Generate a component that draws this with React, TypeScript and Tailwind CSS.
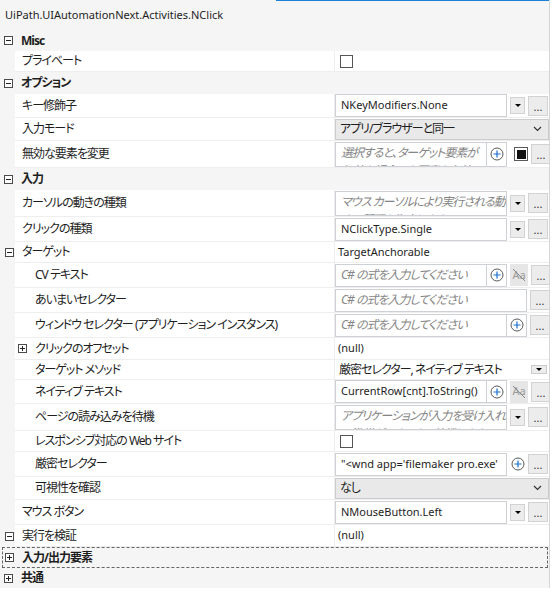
import React from "react";

/* ---------------- SMALL PARTS ---------------- */

// Japanese text: proportional kana + tighter tracking, to get near Yu Gothic UI widths
const JP = "text-[12px] tracking-[-1px]";
const EN = "text-[11px]";

function Expander({ open = true }: { open?: boolean }) {
  return (
    <span className="relative flex h-[9px] w-[9px] shrink-0 items-center justify-center border border-[#4a4a4a] bg-white">
      <span className="absolute h-px w-[5px] bg-[#222]" />
      {!open && <span className="absolute h-[5px] w-px bg-[#222]" />}
    </span>
  );
}

function PlusIcon() {
  return (
    <svg width="14" height="14" viewBox="0 0 14 14">
      <circle cx="7" cy="7" r="6" fill="white" stroke="#5a5a5a" strokeWidth="1" />
      <path d="M7 3.5V10.5M3.5 7H10.5" stroke="#1a6fd0" strokeWidth="1.2" />
    </svg>
  );
}

function Dropdown() {
  return (
    <div className="flex h-[17px] w-[15px] shrink-0 items-center justify-center border border-[#d2d2d2] bg-[#ececec]">
      <span className="h-0 w-0 border-x-[3px] border-t-[3px] border-x-transparent border-t-black" />
    </div>
  );
}

function Dots() {
  return (
    <div className="flex h-[20px] w-[20px] shrink-0 items-end justify-center border border-[#d2d2d2] bg-[#ececec] pb-[3px] text-[11px] leading-none text-[#333]">
      ...
    </div>
  );
}

function AaOff() {
  return (
    <div className="relative flex h-[22px] w-[18px] shrink-0 items-center justify-center bg-[#e6e6e6] text-[11px] text-[#9a9a9a]">
      Aa
      <svg className="absolute inset-0" width="18" height="22" viewBox="0 0 18 22">
        <path d="M3 5L15 17" stroke="#8a8a8a" strokeWidth="1" />
      </svg>
    </div>
  );
}

function BlackSquare() {
  return (
    <div className="flex h-[14px] w-[14px] shrink-0 items-center justify-center border border-[#5a5a5a] bg-white">
      <span className="h-[9px] w-[9px] bg-[#111]" />
    </div>
  );
}

function Checkbox() {
  return <span className="ml-[5px] block h-[13px] w-[13px] border border-[#555] bg-white" />;
}

function Box({
  w,
  h,
  plus,
  children,
}: {
  w: string;
  h: string;
  plus?: boolean;
  children: React.ReactNode;
}) {
  return (
    <div className={`flex ${w} ${h} shrink-0 overflow-hidden border border-[#cdd1d6] bg-white`}>
      <div className="w-0 min-w-0 flex-1 overflow-hidden pl-[5px]">{children}</div>
      {plus && (
        <div className="flex w-[20px] shrink-0 items-center justify-center border-l border-[#cdd1d6]">
          <PlusIcon />
        </div>
      )}
    </div>
  );
}

function Line({ children, ph }: { children: React.ReactNode; ph?: boolean }) {
  return (
    <div
      className={`flex h-full items-center overflow-hidden whitespace-nowrap ${
        ph ? `${JP} italic text-[#858585]` : `${EN} text-[#1e1e1e]`
      }`}
    >
      {children}
    </div>
  );
}

// multi-line text box: first line shown, only the top of the second peeks out
function Multi({ children }: { children: React.ReactNode }) {
  return (
    <div className={`${JP} h-full overflow-hidden break-all pt-[1px] leading-[18px] italic text-[#858585]`}>
      {children}
    </div>
  );
}

function Combo({ text }: { text: string }) {
  return (
    <div className="flex h-[21px] flex-1 items-center justify-between border border-[#cccccc] bg-[#e9e9e9] pl-[4px] pr-[6px] text-[#1e1e1e]">
      <span className={`whitespace-nowrap ${JP}`}>{text}</span>
      <svg width="9" height="6" viewBox="0 0 9 6">
        <path d="M1 1L4.5 4.5L8 1" fill="none" stroke="#333" strokeWidth="1.2" />
      </svg>
    </div>
  );
}

/* ---------------- ROWS ---------------- */

function Category({
  label,
  h,
  open = true,
  focus,
}: {
  label: string;
  h: string;
  open?: boolean;
  focus?: boolean;
}) {
  return (
    <div
      className={`flex items-center bg-[#f5f5f5] ${h} ${
        focus ? "ml-[2px] mr-px border border-dashed border-[#666] pl-[2px]" : "pl-[4px]"
      }`}
    >
      <Expander open={open} />
      <span className={`ml-[8px] font-bold text-[#1e1e1e] ${JP}`}>{label}</span>
    </div>
  );
}

function Prop({
  name,
  h,
  level = 1,
  gutterExp,
  nameExp,
  children,
}: {
  name: string;
  h: string;
  level?: 1 | 2;
  gutterExp?: boolean;
  nameExp?: boolean;
  children?: React.ReactNode;
}) {
  return (
    <div className={`flex ${h}`}>
      <div className="flex w-[15px] shrink-0 items-center bg-[#f5f5f5] pl-[5px]">
        {gutterExp && <Expander />}
      </div>
      <div
        className={`flex w-[319px] shrink-0 items-center border-b border-[#eeeeee] bg-white text-[#1e1e1e] ${
          nameExp ? "pl-[3px]" : level === 2 ? "pl-[20px]" : "pl-[7px]"
        }`}
      >
        {nameExp && (
          <span className="mr-[8px]">
            <Expander open={false} />
          </span>
        )}
        <span className={`whitespace-nowrap ${JP}`}>{name}</span>
      </div>
      <div className="flex min-w-0 flex-1 items-center gap-[3px] overflow-hidden border-b border-l border-[#eeeeee] bg-white">
        {children}
      </div>
    </div>
  );
}

function Plain({ children }: { children: React.ReactNode }) {
  return <span className={`pl-[3px] text-[#1e1e1e] ${EN}`}>{children}</span>;
}

/* ---------------- UI ---------------- */

export default function App() {
  return (
    <div className="relative h-[593px] w-[552px] overflow-hidden bg-white font-['Noto_Sans','Noto_Sans_CJK_JP',sans-serif] text-[12px] [font-feature-settings:'palt']">
      {/* focus accent along the top edge */}
      <div className="absolute left-[276px] top-0 h-px w-[273px] bg-[#1c7fd6]" />

      <div className="w-[550px] border-r border-[#d6d6d6] bg-[#f5f5f5]">
        {/* TITLE */}
        <div className={`flex h-[30px] items-center pl-[5px] text-[#1e1e1e] ${EN}`}>
          UiPath.UIAutomationNext.Activities.NClick
        </div>

        <Category label="Misc" h="h-[21px]" />
        <Prop name="プライベート" h="h-[21px]">
          <Checkbox />
        </Prop>

        <Category label="オプション" h="h-[22px]" />
        <Prop name="キー修飾子" h="h-[24px]">
          <Box w="w-[172px]" h="h-[23px]">
            <Line>NKeyModifiers.None</Line>
          </Box>
          <Dropdown />
          <Dots />
        </Prop>
        <Prop name="入力モード" h="h-[23px]">
          <Combo text="アプリ/ブラウザーと同一" />
        </Prop>
        <Prop name="無効な要素を変更" h="h-[27px]">
          <Box w="w-[172px]" h="h-[25px]" plus>
            <Multi>選択すると、ターゲット要素が無効な場合でも要素を有効にして操作を実行します。</Multi>
          </Box>
          <span className="ml-px" />
          <BlackSquare />
          <Dots />
        </Prop>

        <Category label="入力" h="h-[22px]" />
        <Prop name="カーソルの動きの種類" h="h-[27px]">
          <Box w="w-[172px]" h="h-[25px]">
            <Multi>マウス カーソルにより実行される動きの種類を指定します。</Multi>
          </Box>
          <Dropdown />
          <Dots />
        </Prop>
        <Prop name="クリックの種類" h="h-[25px]">
          <Box w="w-[172px]" h="h-[23px]">
            <Line>NClickType.Single</Line>
          </Box>
          <Dropdown />
          <Dots />
        </Prop>
        <Prop name="ターゲット" h="h-[21px]" gutterExp>
          <Plain>TargetAnchorable</Plain>
        </Prop>
        <Prop name="CV テキスト" h="h-[25px]" level={2}>
          <Box w="w-[172px]" h="h-[23px]" plus>
            <Line ph>C# の式を入力してください</Line>
          </Box>
          <AaOff />
          <Dots />
        </Prop>
        <Prop name="あいまいセレクター" h="h-[25px]" level={2}>
          <Box w="w-[192px]" h="h-[23px]">
            <Line ph>C# の式を入力してください</Line>
          </Box>
          <Dots />
        </Prop>
        <Prop name="ウィンドウ セレクター (アプリケーション インスタンス)" h="h-[25px]" level={2}>
          <Box w="w-[192px]" h="h-[23px]" plus>
            <Line ph>C# の式を入力してください</Line>
          </Box>
          <Dots />
        </Prop>
        <Prop name="クリックのオフセット" h="h-[22px]" level={2} nameExp>
          <Plain>(null)</Plain>
        </Prop>
        <Prop name="ターゲット メソッド" h="h-[20px]" level={2}>
          <div className="flex flex-1 items-center justify-between pl-[4px] pr-[2px]">
            <span className={`whitespace-nowrap text-[#1e1e1e] ${JP}`}>厳密セレクター, ネイティブ テキスト</span>
            <div className="flex h-[9px] w-[16px] items-center justify-center border border-[#cccccc] bg-[#ececec]">
              <span className="h-0 w-0 border-x-[3px] border-t-[3px] border-x-transparent border-t-black" />
            </div>
          </div>
        </Prop>
        <Prop name="ネイティブ テキスト" h="h-[24px]" level={2}>
          <Box w="w-[172px]" h="h-[23px]" plus>
            <Line>CurrentRow[cnt].ToString()</Line>
          </Box>
          <AaOff />
          <Dots />
        </Prop>
        <Prop name="ページの読み込みを待機" h="h-[27px]" level={2}>
          <Box w="w-[172px]" h="h-[25px]">
            <Multi>アプリケーションが入力を受け入れる準備ができるまで待機します。</Multi>
          </Box>
          <Dropdown />
          <Dots />
        </Prop>
        <Prop name="レスポンシブ対応の Web サイト" h="h-[21px]" level={2}>
          <Checkbox />
        </Prop>
        <Prop name="厳密セレクター" h="h-[25px]" level={2}>
          <Box w="w-[172px]" h="h-[23px]">
            <Line>"&lt;wnd app='filemaker pro.exe'</Line>
          </Box>
          <div className="flex w-[15px] shrink-0 justify-center">
            <PlusIcon />
          </div>
          <Dots />
        </Prop>
        <Prop name="可視性を確認" h="h-[23px]" level={2}>
          <Combo text="なし" />
        </Prop>
        <Prop name="マウス ボタン" h="h-[25px]">
          <Box w="w-[172px]" h="h-[23px]">
            <Line>NMouseButton.Left</Line>
          </Box>
          <Dropdown />
          <Dots />
        </Prop>
        <Prop name="実行を検証" h="h-[22px]" gutterExp>
          <Plain>(null)</Plain>
        </Prop>

        <Category label="入力/出力要素" h="h-[21px]" open={false} focus />
        <Category label="共通" h="h-[20px]" open={false} />
      </div>
    </div>
  );
}
